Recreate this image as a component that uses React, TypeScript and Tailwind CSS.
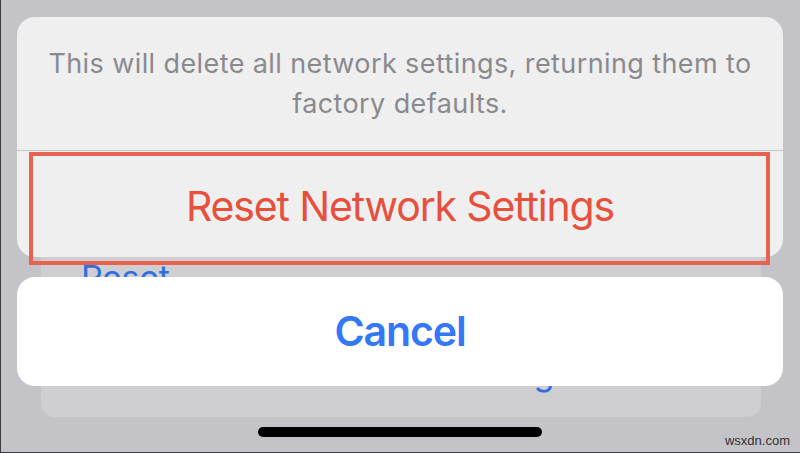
import React from 'react';

const sf = { fontFamily: 'Inter, "Liberation Sans", sans-serif' };

const BehindCard: React.FC = () => (
  <div className="absolute left-[40px] top-[140px] w-[720px] h-[277px] rounded-[14px] bg-[#cfcfd1] pt-[121px] pl-[40px] text-[34px] leading-none text-[#2f6fe0]">
    <p className="tracking-[-0.3px]">Reset</p>
    <p className="mt-[61px] tracking-[0.2px]">Erase All Content and Settings</p>
  </div>
);

export default function App() {
  return (
    <div className="relative w-[800px] h-[453px] overflow-hidden bg-[#c4c4c8] border-l border-b border-[#3c3c3c]" style={sf}>
      <BehindCard />
      <div className="relative z-10 flex flex-col items-center pt-[17px] pr-px">
        <div className="relative w-[766px] h-[240px] rounded-[18px] bg-[#efefef] flex flex-col">
          <div className="h-[133px] flex items-center justify-center text-center text-[27px] leading-[40px] text-[#8a8a8e] tracking-[0.4px]">
            <p>
              This will delete all network settings, returning them to
              <br />
              factory defaults.
            </p>
          </div>
          <div className="h-px bg-[#c9c9cc]" />
          <div className="flex-1 flex items-center justify-center pt-[5px] text-[41px] text-[#e6503c] tracking-[-1.15px]">
            Reset Network Settings
          </div>
          <div className="absolute left-[12px] top-[135px] w-[741px] h-[113px] border-4 border-[#e9624f]" />
        </div>
        <div className="mt-[20px] w-[766px] h-[109px] rounded-[18px] bg-white flex items-center justify-center text-[41px] font-semibold text-[#3478f6] tracking-[-1.1px]">
          Cancel
        </div>
        <div className="mt-[41px] w-[284px] h-[10px] rounded-full bg-black" />
      </div>
      <div className="absolute right-[10px] bottom-[2px] text-[13px] text-[#333333]" style={{ fontFamily: '"Liberation Sans", sans-serif' }}>
        wsxdn.com
      </div>
    </div>
  );
}
